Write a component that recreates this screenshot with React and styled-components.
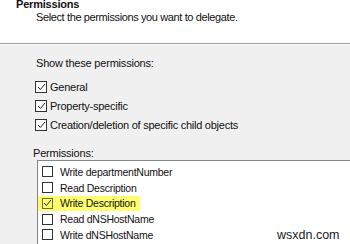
import React from 'react';
import styled, { createGlobalStyle } from 'styled-components';

const GlobalStyle = createGlobalStyle`
  html, body {
    margin: 0;
    padding: 0;
    background: #f0f0f0;
  }
  body {
    width: 350px;
    height: 244px;
    overflow: hidden;
    font-family: "Liberation Sans", Arial, sans-serif;
    font-size: 10.5px;
    letter-spacing: -0.05px;
    color: #111;
  }
`;

const Page = styled('div')`
  position: relative;
  width: 350px;
  height: 244px;
  overflow: hidden;
  display: flex;
  flex-direction: column;
`;

const Header = styled('div')`
  height: 43px;
  flex: none;
  background: #fff;
  border-bottom: 1px solid #a0a0a0;
  display: flex;
  flex-direction: column;
  padding-left: 16px;
`;

const Title = styled('div')`
  font-weight: 700;
  font-size: 11px;
  letter-spacing: -0.2px;
  line-height: 14px;
  margin-top: -3px;
`;

const Subtitle = styled('div')`
  font-size: 11px;
  letter-spacing: -0.38px;
  line-height: 13px;
  margin-left: 20px;
`;

const Body = styled('div')`
  flex: 1;
  border-top: 1px solid #fbfbfb;
  padding: 11px 0 0 35px;
  display: flex;
  flex-direction: column;
`;

const Label = styled('div')`
  font-size: 11px;
  letter-spacing: -0.2px;
  line-height: 14px;
  margin-left: ${(p) => p.$shift || 0}px;
  margin-top: ${(p) => p.$top || 0}px;
`;

const Options = styled('div')`
  display: flex;
  flex-direction: column;
  margin-top: 7px;
`;

const OptionRow = styled('label')`
  display: flex;
  align-items: center;
  gap: 3px;
  height: 19px;
  font-size: 11px;
  letter-spacing: -0.25px;
`;

const Box = styled('span')`
  flex: none;
  width: ${(p) => p.$size}px;
  height: ${(p) => p.$size}px;
  box-sizing: border-box;
  border: 1px solid ${(p) => (p.$marked ? '#6e6e3a' : '#333')};
  background: ${(p) => (p.$marked ? 'transparent' : '#fff')};
  display: flex;
  align-items: center;
  justify-content: center;
`;

const ListBox = styled('div')`
  flex: 1;
  margin: 0 -20px 0 2px;
  background: #fff;
  border: 1px solid #828790;
  border-bottom: none;
  padding-top: 3px;
  display: flex;
  flex-direction: column;
  align-items: flex-start;
`;

const ListItem = styled('div')`
  display: flex;
  align-items: center;
  gap: 7px;
  height: 15.75px;
  padding: 0 4px 0 4px;
  font-size: 10.5px;
  letter-spacing: -0.25px;
  background: ${(p) => (p.$highlight ? '#ffff6e' : 'transparent')};
`;

const Watermark = styled('div')`
  position: absolute;
  left: 277px;
  top: 227px;
  font-size: 12.5px;
  letter-spacing: 0;
  line-height: 16px;
  color: #1a1a1a;
`;

const Check = () => (
  <svg width="9" height="8" viewBox="0 0 9 8">
    <polyline points="1,4 3.4,6.5 8,1" fill="none" stroke="#222" strokeWidth="1" />
  </svg>
);

const CheckBox = ({ size, checked, marked }) => (
  <Box $size={size} $marked={marked}>
    {checked ? <Check /> : null}
  </Box>
);

const shown = ['General', 'Property-specific', 'Creation/deletion of specific child objects'];

const perms = [
  { name: 'Write departmentNumber' },
  { name: 'Read Description' },
  { name: 'Write Description', checked: true, highlight: true },
  { name: 'Read dNSHostName' },
  { name: 'Write dNSHostName' },
];

export default function App() {
  return (
    <>
      <GlobalStyle />
      <Page>
        <Header>
          <Title>Permissions</Title>
          <Subtitle>Select the permissions you want to delegate.</Subtitle>
        </Header>
        <Body>
          <Label $shift={1}>Show these permissions:</Label>
          <Options>
            {shown.map((s) => (
              <OptionRow key={s}>
                <CheckBox size={12} checked />
                <span>{s}</span>
              </OptionRow>
            ))}
          </Options>
          <Label $shift={-2} $top={12}>
            Permissions:
          </Label>
          <ListBox>
            {perms.map((p) => (
              <ListItem key={p.name} $highlight={p.highlight}>
                <CheckBox size={11} checked={p.checked} marked={p.highlight} />
                <span>{p.name}</span>
              </ListItem>
            ))}
          </ListBox>
        </Body>
        <Watermark>wsxdn.com</Watermark>
      </Page>
    </>
  );
}
